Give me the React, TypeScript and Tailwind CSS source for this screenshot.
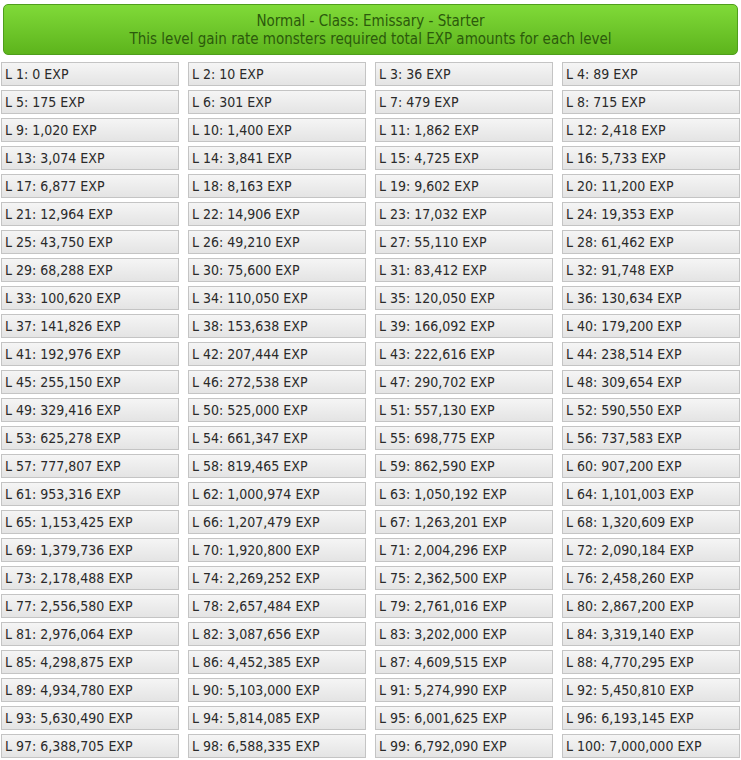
const V = ["0","10","36","89","175","301","479","715","1,020","1,400","1,862","2,418","3,074","3,841","4,725","5,733","6,877","8,163","9,602","11,200","12,964","14,906","17,032","19,353","43,750","49,210","55,110","61,462","68,288","75,600","83,412","91,748","100,620","110,050","120,050","130,634","141,826","153,638","166,092","179,200","192,976","207,444","222,616","238,514","255,150","272,538","290,702","309,654","329,416","525,000","557,130","590,550","625,278","661,347","698,775","737,583","777,807","819,465","862,590","907,200","953,316","1,000,974","1,050,192","1,101,003","1,153,425","1,207,479","1,263,201","1,320,609","1,379,736","1,920,800","2,004,296","2,090,184","2,178,488","2,269,252","2,362,500","2,458,260","2,556,580","2,657,484","2,761,016","2,867,200","2,976,064","3,087,656","3,202,000","3,319,140","4,298,875","4,452,385","4,609,515","4,770,295","4,934,780","5,103,000","5,274,990","5,450,810","5,630,490","5,814,085","6,001,625","6,193,145","6,388,705","6,588,335","6,792,090","7,000,000"];

export default function App() {
  return (
    <div className="w-[741px] h-[760px] bg-white overflow-hidden" style={{ fontFamily: "Tahoma, 'DejaVu Sans Condensed', 'DejaVu Sans', sans-serif" }}>
      <div className="mx-[3px] mt-[4px] h-[51px] rounded-[5px] border border-[#4f9e1c] bg-gradient-to-b from-[#80da38] to-[#5db41c] flex flex-col items-center justify-center text-[15px] leading-[18px] text-[#2c5a0c]">
        <div>Normal - Class: Emissary - Starter</div>
        <div>This level gain rate monsters required total EXP amounts for each level</div>
      </div>
      <div className="mt-[7px] pl-[1px] grid grid-cols-[178px_178px_178px_178px] gap-x-[9px] gap-y-[4px]">
        {V.map((v, i) => (
          <div key={i} className="h-[24px] border border-[#c4c4c4] bg-gradient-to-b from-[#f5f5f5] to-[#e4e4e4] flex items-center pl-[3px] text-[14px] text-[#2a2a2a] whitespace-nowrap">
            L {i + 1}: {v} EXP
          </div>
        ))}
      </div>
    </div>
  );
}
